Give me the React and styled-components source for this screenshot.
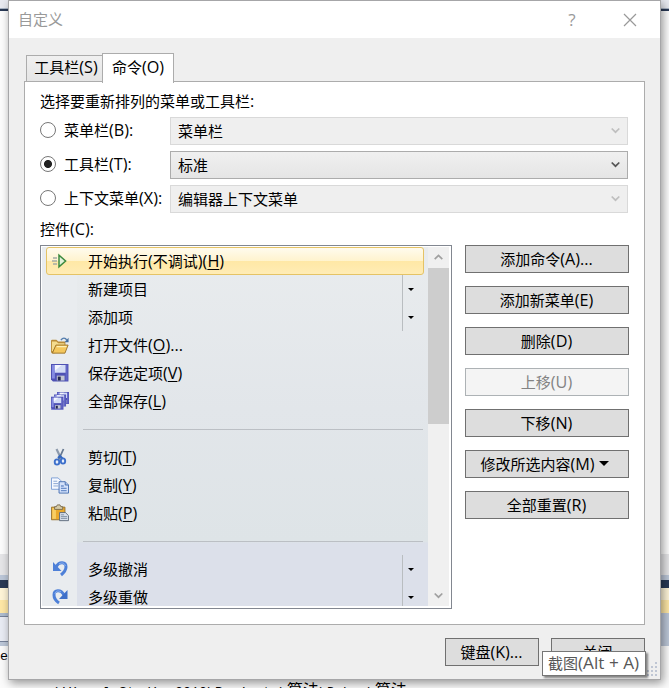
import React, { useState } from 'react'
import styled, { createGlobalStyle, css } from 'styled-components'

const uiFont = '"Open Sans", "Noto Sans CJK SC", sans-serif'

const GlobalStyle = createGlobalStyle`
    * {
        box-sizing: border-box;
    }

    body {
        margin: 0;
        overflow: hidden;
        font: 15px/20px ${uiFont};
        color: #000;
    }
`

const Desktop = styled.div`
    position: relative;
    width: 669px;
    height: 688px;
    overflow: hidden;
    background: #fbfbfb;
`

const Backdrop = styled.div`
    display: grid;
    grid-template-columns: 334px 335px;
    height: 688px;
`

const BackdropHalf = styled.div`
    display: flex;
    flex-direction: column;
`

const Strip = styled.div`
    flex: none;
    height: ${props => props.h}px;
    background: ${props => props.fill};
`

const ConsoleText = styled.span`
    position: absolute;
    left: ${props => props.x}px;
    top: ${props => props.y}px;
    font: 16px/16px "Liberation Mono", "Noto Sans CJK SC", monospace;
    white-space: pre;
`

const ConsoleLatin = styled.span`
    font-size: 13.33px;
`

// Latin glyphs run slightly larger than the Chinese ones beside them
const Latin = styled.span`
    font-size: 16.2px;
    line-height: 1;
`

const Dialog = styled.div`
    position: absolute;
    left: 8px;
    top: 0;
    width: 653px;
    height: 680px;
    display: flex;
    flex-direction: column;
    background: #efefef;
    border: 1px solid #a6a6a8;
    box-shadow: 2px 3px 9px rgba(0, 0, 0, .42);
`

const TitleBar = styled.div`
    display: flex;
    align-items: center;
    height: 37px;
    padding: 0 23px 0 9px;
    background: #fff;
    color: #999;
`

const Title = styled.span`
    flex: 1;
    padding-bottom: 1px;
`

const HelpMark = styled.span`
    width: 16px;
    margin-right: 43px;
    font: 17px/20px ${uiFont};
    text-align: center;
`

const Tabs = styled.div`
    display: flex;
    align-items: flex-end;
    height: 45px;
    margin-bottom: -2px;
    padding-left: 17px;
    position: relative;
`

const Tab = styled.button`
    height: 26px;
    width: 77px;
    margin-bottom: 2px;
    padding: 0 0 3px 2px;
    border: 1px solid #acacac;
    border-width: 1px 0 0 1px;
    background: linear-gradient(#f0f0f0, #e5e5e5);
    font: inherit;
    color: #000;
    white-space: nowrap;

    ${props => props.active && css`
        width: 72px;
        height: 30px;
        margin: 0 0 0 -1px;
        padding: 0 0 4px;
        border-width: 1px 1px 0;
        background: #fff;
    `}
`

const Panel = styled.div`
    width: 621px;
    height: 544px;
    margin-left: 15px;
    padding: 9px 15px 0;
    border: 1px solid #acacac;
    background: #fff;
`

const Caption = styled.div`
    height: 20px;
    margin-bottom: ${props => props.gap || 0}px;
`

const OptionRow = styled.div`
    display: flex;
    align-items: center;
    height: 28px;
    margin-bottom: 6px;
`

const OptionLabel = styled.label`
    display: flex;
    align-items: center;
    width: 130px;
    padding-bottom: 2px;
    white-space: nowrap;
`

const Radio = styled.input`
    appearance: none;
    flex: none;
    width: 16px;
    height: 16px;
    margin: 0 8px 0 0;
    border: 1px solid #777;
    border-radius: 50%;
    background: #fff;

    &:checked {
        background: radial-gradient(circle, #222 3.6px, #fff 4.4px);
    }
`

const Combo = styled.div`
    display: flex;
    align-items: center;
    justify-content: space-between;
    width: 458px;
    height: 28px;
    padding: 0 7px 1px 7px;
    border: 1px solid ${props => props.enabled ? '#acacac' : '#d9d9d9'};
    background: ${props => props.enabled ? 'linear-gradient(#f0f0f0, #e5e5e5)' : '#efefef'};
    color: ${props => props.enabled ? '#555' : '#bfbfbf'};
`

const ComboText = styled.span`
    color: #000;
`

const Columns = styled.div`
    display: flex;
    gap: 13px;
`

const ListBox = styled.div`
    display: flex;
    width: 412px;
    height: 364px;
    padding: 1px 2px 2px 1px;
    border: 1px solid #828790;
    background: #fff;
`

const List = styled.div`
    flex: 1;
    overflow: hidden;
    background:
        linear-gradient(#e9ecef, #e9ecef) 0 0 / 35px 100% no-repeat,
        linear-gradient(#e9ecee, #e2e6ea 45%, #dee4e7 82%, #dce0ea 82.5%, #dce0ea);
`

const Item = styled.div`
    display: flex;
    align-items: center;
    height: 28px;
    margin: 0 4px;
    padding-left: 4px;
    border: 1px solid transparent;
    border-radius: 3px;

    ${props => props.selected && css`
        border-color: #e5c365;
        background: linear-gradient(#fffbee, #fff3cd 50%, #ffe8a6 51%, #ffecb5);
    `}
`

const IconCell = styled.span`
    display: flex;
    justify-content: center;
    width: 18px;
    margin-right: 19px;
`

const ItemText = styled.span`
    flex: 1;
    white-space: nowrap;
`

const Key = styled.span`
    text-decoration: underline;
    text-underline-offset: 2px;
    text-decoration-thickness: 1px;
`

const SplitArrow = styled.span`
    display: flex;
    align-items: center;
    width: 21px;
    height: 28px;
    padding-left: 5px;
    border-left: 1px solid #b9bdc0;
`

const Divider = styled.div`
    height: 28px;
    padding: 14px 5px 0 41px;

    &::after {
        content: '';
        display: block;
        height: 1px;
        background: #bbbfc4;
    }
`

const ScrollBar = styled.div`
    display: flex;
    flex-direction: column;
    width: 21px;
    background: #f0f0f0;
    color: #a0a0a0;
`

const ScrollButton = styled.span`
    display: flex;
    align-items: center;
    justify-content: center;
    height: 21px;
`

const Thumb = styled.div`
    height: 156px;
    margin-bottom: auto;
    background: #cdcdcd;
`

const Actions = styled.div`
    display: flex;
    flex-direction: column;
    gap: 13px;
`

const Button = styled.button`
    display: flex;
    align-items: center;
    justify-content: center;
    gap: 4px;
    width: ${props => props.w || 164}px;
    height: 28px;
    padding: 0 1px 1px 0;
    border: 1px solid #707070;
    background: #ddd;
    font: inherit;
    color: #000;
    white-space: nowrap;

    &:disabled {
        border-color: #adb2b5;
        background: #f4f4f4;
        color: #838383;
    }
`

const MenuButton = styled(Button)`
    padding-right: 5px;
`

const Footer = styled.div`
    display: flex;
    justify-content: flex-end;
    gap: 12px;
    padding: 13px 15px 0 0;
`

const Tooltip = styled.div`
    position: absolute;
    left: 542px;
    top: 651px;
    width: 104px;
    height: 25px;
    padding-left: 5px;
    border: 1px solid #767676;
    background: #fff;
    box-shadow: 2px 2px 2px rgba(0, 0, 0, .45);
    color: #575757;
    line-height: 23px;
    white-space: nowrap;
`

const TooltipLatin = styled(Latin)`
    font-size: 17.2px;
`

const Grip = styled.svg`
    position: absolute;
    right: 3px;
    bottom: 3px;
`

const Mixed = ({ children, as: Run = Latin }) => (
    <span>
        {children.split(/([\x20-\x7e]+)/).map((part, i) => i % 2 ? <Run key={i}>{part}</Run> : part)}
    </span>
)

const Chevron = ({ up }) => (
    <svg width="9" height="7" viewBox="0 0 9 7">
        <path d={up ? 'M.7 5.2 4.5 1.5l3.8 3.7' : 'M.7 1.5l3.8 3.7 3.8-3.7'} fill="none" stroke="currentColor" strokeWidth="1.7" />
    </svg>
)

const Caret = ({ size = 6 }) => (
    <svg width={size} height={size / 2} viewBox="0 0 6 3">
        <path d="M0 0h6L3 3z" />
    </svg>
)

const Floppy = ({ x = 0, y = 0, s = 1 }) => (
    <g transform={`translate(${x} ${y}) scale(${s})`}>
        <path d="M0 0h18v18H2L0 16z" fill="#4f52b4" />
        <path d="M1 1h3v14H1z" fill="#858be2" />
        <path d="M15 1h2v16h-2z" fill="#6367c8" />
        <path d="M4 1h11v8H4z" fill="#d3dcf6" />
        <path d="M4 1h7L4 7z" fill="#f4f7ff" />
        <path d="M6 12h8v5H6z" fill="#c3c7d2" />
        <path d="M7 13h3v4H7z" fill="#22264f" />
    </g>
)

const icons = {
    run: (
        <svg width="18" height="16" viewBox="0 0 18 16">
            <path d="M2 5h4M1 8h5M2 11h4" stroke="#a5aaa5" strokeWidth="1.3" />
            <path d="M8 2.2v11.6L14.600 8z" fill="#e2f2da" stroke="#3c8a3f" strokeWidth="1.5" />
        </svg>
    ),
    open: (
        <svg width="20" height="19" viewBox="0 0 20 19">
            <path d="M0 4l1-1h5l2 2h8v4L4 18H1l-1-1z" fill="#b98c38" />
            <path d="M1 5h5l2 2h7v3H5L2 16H1z" fill="#f5dc8d" />
            <path d="M5.500 9H19l-3.500 9H1.500z" fill="#f4c75d" stroke="#9a7028" />
            <path d="M6.500 10h11l-.5 1.500H6z" fill="#fff0b5" />
            <path d="M11 3.500c2-3 5-3 6.500 0" fill="none" stroke="#557eae" strokeWidth="1.5" />
            <path d="M19.500 1v5H15z" fill="#456f9f" />
        </svg>
    ),
    save: (
        <svg width="18" height="18" viewBox="0 0 18 18"><Floppy s={0.97} /></svg>
    ),
    saveAll: (
        <svg width="18" height="18" viewBox="0 0 18 18">
            <Floppy x={6} y={0} s={0.67} />
            <Floppy x={3} y={2.5} s={0.67} />
            <path d="M0 4.500h12.500V18H0z" fill="#8d93d8" />
            <Floppy x={0} y={5} s={0.68} />
        </svg>
    ),
    cut: (
        <svg width="16" height="18" viewBox="0 0 16 18">
            <path d="M4.500 1 9.800 12" stroke="#8d9aac" strokeWidth="2.2" />
            <path d="M11.500 1 6.500 12" stroke="#657890" strokeWidth="1.8" />
            <path d="M6 10 8 8l2.500 2.500" stroke="#3567bd" strokeWidth="2" fill="none" />
            <ellipse cx="5" cy="14" rx="2.3" ry="2.6" fill="#e8effc" stroke="#3d70cb" strokeWidth="1.9" />
            <ellipse cx="11" cy="13" rx="2.2" ry="2.6" fill="#e8effc" stroke="#3d70cb" strokeWidth="1.9" />
        </svg>
    ),
    copy: (
        <svg width="19" height="17" viewBox="0 0 19 17">
            <path d="M.5.5h7l3 3v9H.5z" fill="#f5f8ff" stroke="#7d9fd6" />
            <path d="M2.500 4h4m-4 2.500h5m-5 2.500h5" stroke="#8aa5d2" />
            <path d="M8.500 4.500H15l3.500 3.500v8.500h-10z" fill="#d3e1fa" stroke="#4a71b2" />
            <path d="M15 4.500V8h3.500" fill="#adc3e8" stroke="#4a71b2" />
            <path d="M10.500 9h3m-3 2.500h6m-6 2.500h6" stroke="#6c8fca" strokeWidth="1.4" />
        </svg>
    ),
    paste: (
        <svg width="20" height="18" viewBox="0 0 20 18">
            <path d="M.5 2.500h15v14H.5z" fill="#eaa92c" stroke="#94702c" />
            <path d="M1.500 3.500h4v12h-4z" fill="#f8ce64" />
            <path d="M4 5V2h2l1-2h3l1 2h2v3z" fill="#d6cba8" stroke="#76684b" />
            <path d="M9.500 8.500H16l3.500 3.500v5.500h-10z" fill="#d6deea" stroke="#596879" />
            <path d="M11 11h3.500M11 13h7m-7 2h7" stroke="#7c8ba0" />
        </svg>
    ),
    undo: (
        <svg width="17" height="18" viewBox="0 0 17 18">
            <path d="M4 7C7 1 14 1.500 14 7c0 3.500-2 5.500-5 8" fill="none" stroke="#4e80d8" strokeWidth="3" />
            <path d="M1 2v9h8.500z" fill="#4e80d8" />
            <path d="M7 4c3-2 6-1 6.300 2" fill="none" stroke="#8db2f0" />
        </svg>
    ),
    redo: (
        <svg width="17" height="18" viewBox="0 0 17 18">
            <path d="M12 7C9 1 2 1.500 2 7c0 3.500 2 6 5 8" fill="none" stroke="#4e80d8" strokeWidth="3" />
            <path d="M15.500 2v9H7z" fill="#3f70c9" />
            <path d="M9 4C6 2 3.500 3 3 6" fill="none" stroke="#8db2f0" />
        </svg>
    ),
}

const commands = [
    { text: '开始执行(不调试)', mnemonic: 'H', icon: 'run', selected: true },
    { text: '新建项目', split: true },
    { text: '添加项', split: true },
    { text: '打开文件', mnemonic: 'O', tail: '...', icon: 'open' },
    { text: '保存选定项', mnemonic: 'V', icon: 'save' },
    { text: '全部保存', mnemonic: 'L', icon: 'saveAll' },
    { divider: true },
    { text: '剪切', mnemonic: 'T', icon: 'cut' },
    { text: '复制', mnemonic: 'Y', icon: 'copy' },
    { text: '粘贴', mnemonic: 'P', icon: 'paste' },
    { divider: true },
    { text: '多级撤消', icon: 'undo', split: true },
    { text: '多级重做', icon: 'redo', split: true },
]

const options = [
    { id: 'menu', label: '菜单栏(B):', value: '菜单栏' },
    { id: 'toolbar', label: '工具栏(T):', value: '标准' },
    { id: 'context', label: '上下文菜单(X):', value: '编辑器上下文菜单' },
]

const CommandItem = ({ text, mnemonic, tail, icon, selected, split }) => (
    <Item selected={selected}>
        <IconCell>{icons[icon]}</IconCell>
        <ItemText>
            <Mixed>{text}</Mixed>
            {mnemonic && <Latin>(<Key>{mnemonic}</Key>){tail}</Latin>}
        </ItemText>
        {split && <SplitArrow><Caret /></SplitArrow>}
    </Item>
)

const App = () => {
    const [target, setTarget] = useState('toolbar')

    return (
        <Desktop>
            <GlobalStyle />
            <Backdrop>
                <BackdropHalf>
                    <Strip h={8} fill="#e8eaf1" />
                    <Strip h={1} fill="#a9b4c5" />
                    <Strip h={2} fill="#293955" />
                    <Strip h={543} fill="#fdfdfd" />
                    <Strip h={21} fill="#e6e6e8" />
                    <Strip h={5} fill="#bcc7d8" />
                    <Strip h={8} fill="#293955" />
                    <Strip h={12} fill="#fff5d8" />
                    <Strip h={13} fill="#ffe8a6" />
                    <Strip h={3} fill="#aebccf" />
                    <Strip h={1} fill="#77839a" />
                    <Strip h={24} fill="#e9ecf4" />
                    <Strip h={1} fill="#77839a" />
                    <Strip h={4} fill="#bcc7d8" />
                </BackdropHalf>
                <BackdropHalf>
                    <Strip h={8} fill="#e8eaf1" />
                    <Strip h={1} fill="#a9b4c5" />
                    <Strip h={2} fill="#293955" />
                    <Strip h={543} fill="#fdfdfd" />
                    <Strip h={21} fill="#e6e6e8" />
                    <Strip h={5} fill="#bcc7d8" />
                    <Strip h={8} fill="#293955" />
                    <Strip h={12} fill="#fff5d8" />
                    <Strip h={13} fill="#ffe8a6" />
                    <Strip h={33} fill="#bcc7d8" />
                </BackdropHalf>
            </Backdrop>
            <ConsoleText x={0} y={648}><ConsoleLatin>el</ConsoleLatin></ConsoleText>
            <ConsoleText x={55} y={684}>
                <Mixed as={ConsoleLatin}>{'\\Visual Studio 2010\\Projects\\算法\\Debug\\算法'}</Mixed>
            </ConsoleText>

            <Dialog>
                <TitleBar>
                    <Title>自定义</Title>
                    <HelpMark>?</HelpMark>
                    <svg width="14" height="14" viewBox="0 0 14 14">
                        <path d="M1 1l12 12M13 1 1 13" stroke="#999" strokeWidth="1.2" />
                    </svg>
                </TitleBar>
                <Tabs>
                    <Tab><Mixed>工具栏(S)</Mixed></Tab>
                    <Tab active><Mixed>命令(O)</Mixed></Tab>
                </Tabs>
                <Panel>
                    <Caption gap={6}><Mixed>选择要重新排列的菜单或工具栏:</Mixed></Caption>
                    {options.map(({ id, label, value }) => (
                        <OptionRow key={id}>
                            <OptionLabel>
                                <Radio type="radio" name="target" checked={target === id} onChange={() => setTarget(id)} />
                                <Mixed>{label}</Mixed>
                            </OptionLabel>
                            <Combo enabled={target === id}>
                                <ComboText>{value}</ComboText>
                                <Chevron />
                            </Combo>
                        </OptionRow>
                    ))}
                    <Caption gap={6}><Mixed>控件(C):</Mixed></Caption>
                    <Columns>
                        <ListBox>
                            <List>
                                {commands.map((command, i) => command.divider
                                    ? <Divider key={i} />
                                    : <CommandItem key={i} {...command} />
                                )}
                            </List>
                            <ScrollBar>
                                <ScrollButton><Chevron up /></ScrollButton>
                                <Thumb />
                                <ScrollButton><Chevron /></ScrollButton>
                            </ScrollBar>
                        </ListBox>
                        <Actions>
                            <Button><Mixed>添加命令(A)...</Mixed></Button>
                            <Button><Mixed>添加新菜单(E)</Mixed></Button>
                            <Button><Mixed>删除(D)</Mixed></Button>
                            <Button disabled><Mixed>上移(U)</Mixed></Button>
                            <Button><Mixed>下移(N)</Mixed></Button>
                            <MenuButton><Mixed>修改所选内容(M)</Mixed><Caret size={10} /></MenuButton>
                            <Button><Mixed>全部重置(R)</Mixed></Button>
                        </Actions>
                    </Columns>
                </Panel>
                <Footer>
                    <Button w={94}><Mixed>键盘(K)...</Mixed></Button>
                    <Button w={94}>关闭</Button>
                </Footer>
                <Grip width="10" height="14" viewBox="0 0 10 14">
                    <path d="M8 0h2v2H8zM4 4h2v2H4zM8 4h2v2H8zM0 8h2v2H0zM4 8h2v2H4zM8 8h2v2H8zM0 12h2v2H0zM4 12h2v2H4zM8 12h2v2H8z" fill="#bfc6d4" />
                </Grip>
            </Dialog>
            <Tooltip><Mixed as={TooltipLatin}>截图(Alt + A)</Mixed></Tooltip>
        </Desktop>
    )
}

export default App
